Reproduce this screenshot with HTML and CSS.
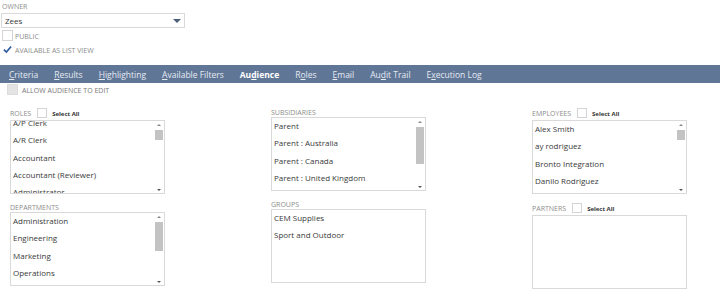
FILE: index.html
```html
<!DOCTYPE html>
<html lang="en">
<head>
    <meta charset="UTF-8">
    <title>Saved Search - Audience</title>
    <link rel="stylesheet" href="styles.css">
</head>
<body>
    <div class="page">
        <div class="main-fields">
            <div class="field-label">OWNER</div>
            <div class="dropdown">
                <span class="dropdown-value">Zees</span>
                <span class="dropdown-arrow"></span>
            </div>
            <div class="check-row">
                <span class="checkbox"></span>
                <span class="check-text">PUBLIC</span>
            </div>
            <div class="check-row">
                <span class="checkbox checked">
                    <svg width="10" height="9" viewBox="0 0 10 9"><path d="M1 4.6 L3.8 7.4 L9 1.2" fill="none" stroke="#2d5aa0" stroke-width="1.8"/></svg>
                </span>
                <span class="check-text">AVAILABLE AS LIST VIEW</span>
            </div>
        </div>

        <nav class="tabs">
            <span class="tab"><u>C</u>riteria</span>
            <span class="tab"><u>R</u>esults</span>
            <span class="tab"><u>H</u>ighlighting</span>
            <span class="tab"><u>A</u>vailable Filters</span>
            <span class="tab active">Au<u>d</u>ience</span>
            <span class="tab">R<u>o</u>les</span>
            <span class="tab"><u>E</u>mail</span>
            <span class="tab">Au<u>d</u>it Trail</span>
            <span class="tab">E<u>x</u>ecution Log</span>
        </nav>

        <div class="subtab">
            <div class="check-row allow">
                <span class="checkbox disabled"></span>
                <span class="check-text">ALLOW AUDIENCE TO EDIT</span>
            </div>

            <div class="audience-grid">
                <div class="audience-col">
                    <div class="list-field">
                        <div class="list-label tall">
                            <span>ROLES</span>
                            <span class="checkbox small"></span>
                            <span class="select-all">Select All</span>
                        </div>
                        <div class="listbox">
                            <ul class="list-items scrolled">
                                <li>A/P Clerk</li>
                                <li>A/R Clerk</li>
                                <li>Accountant</li>
                                <li>Accountant (Reviewer)</li>
                                <li>Administrator</li>
                            </ul>
                            <div class="scrollbar">
                                <span class="arrow up"></span>
                                <div class="track"><span class="thumb short"></span></div>
                                <span class="arrow down"></span>
                            </div>
                        </div>
                    </div>
                    <div class="list-field">
                        <div class="list-label">
                            <span>DEPARTMENTS</span>
                        </div>
                        <div class="listbox">
                            <ul class="list-items">
                                <li>Administration</li>
                                <li>Engineering</li>
                                <li>Marketing</li>
                                <li>Operations</li>
                            </ul>
                            <div class="scrollbar">
                                <span class="arrow up"></span>
                                <div class="track"><span class="thumb medium"></span></div>
                                <span class="arrow down"></span>
                            </div>
                        </div>
                    </div>
                </div>

                <div class="audience-col">
                    <div class="list-field">
                        <div class="list-label">
                            <span>SUBSIDIARIES</span>
                        </div>
                        <div class="listbox">
                            <ul class="list-items">
                                <li>Parent</li>
                                <li>Parent : Australia</li>
                                <li>Parent : Canada</li>
                                <li>Parent : United Kingdom</li>
                            </ul>
                            <div class="scrollbar">
                                <span class="arrow up"></span>
                                <div class="track"><span class="thumb long"></span></div>
                                <span class="arrow down"></span>
                            </div>
                        </div>
                    </div>
                    <div class="list-field">
                        <div class="list-label">
                            <span>GROUPS</span>
                        </div>
                        <div class="listbox">
                            <ul class="list-items">
                                <li>CEM Supplies</li>
                                <li>Sport and Outdoor</li>
                            </ul>
                        </div>
                    </div>
                </div>

                <div class="audience-col">
                    <div class="list-field">
                        <div class="list-label tall">
                            <span>EMPLOYEES</span>
                            <span class="checkbox small"></span>
                            <span class="select-all">Select All</span>
                        </div>
                        <div class="listbox">
                            <ul class="list-items">
                                <li>Alex Smith</li>
                                <li>ay rodriguez</li>
                                <li>Bronto Integration</li>
                                <li>Danilo Rodriguez</li>
                            </ul>
                            <div class="scrollbar">
                                <span class="arrow up"></span>
                                <div class="track"><span class="thumb short"></span></div>
                                <span class="arrow down"></span>
                            </div>
                        </div>
                    </div>
                    <div class="list-field">
                        <div class="list-label tall">
                            <span>PARTNERS</span>
                            <span class="checkbox small"></span>
                            <span class="select-all">Select All</span>
                        </div>
                        <div class="listbox"></div>
                    </div>
                </div>
            </div>
        </div>
    </div>
</body>
</html>
```

FILE: styles.css
```css
:root {
    --tab-color: #607697;
    --label-color: #8c8c8c;
    --text-color: #3a3a3a;
    --border-color: #d9d9d9;
}

* {
    box-sizing: border-box;
    margin: 0;
    padding: 0;
}

body {
    font-family: 'Open Sans', 'Liberation Sans', sans-serif;
    color: var(--text-color);
    background: #fff;
    width: 720px;
    height: 299px;
    overflow: hidden;
}

.page {
    padding-top: 2px;
}

.main-fields {
    padding-left: 2px;
}

.field-label {
    font-size: 7px;
    line-height: 10px;
    color: var(--label-color);
}

.dropdown {
    display: flex;
    align-items: center;
    justify-content: space-between;
    width: 184px;
    height: 15px;
    margin: 1px 0 0 -1px;
    padding: 0 3px 0 3px;
    border: 1px solid var(--border-color);
    font-size: 8px;
}

.dropdown-arrow {
    width: 0;
    height: 0;
    border-left: 4px solid transparent;
    border-right: 4px solid transparent;
    border-top: 4px solid #4b5d78;
}

.check-row {
    display: flex;
    align-items: flex-end;
    gap: 2px;
    height: 11px;
    margin-top: 2px;
}

.check-row + .check-row {
    margin-top: 3px;
}

.checkbox {
    display: inline-flex;
    align-items: center;
    justify-content: center;
    width: 11px;
    height: 11px;
    border: 1px solid #d4d4d4;
    background: #fff;
}

.checkbox.checked {
    border-color: transparent;
}

.checkbox.disabled {
    background: #e4e4e4;
    border-color: #dcdcdc;
}

.checkbox.small {
    width: 10px;
    height: 10px;
    margin: 0 5px 0 6px;
}

.check-text {
    font-size: 7px;
    line-height: 9px;
    color: var(--label-color);
}

.tabs {
    display: flex;
    align-items: center;
    gap: 16px;
    height: 18px;
    margin-top: 10px;
    padding-left: 9px;
    background: var(--tab-color);
    font-size: 8.5px;
    color: #e6ebf2;
}

.tab {
    position: relative;
    white-space: nowrap;
}

.tab u {
    text-underline-offset: 1px;
}

.tab.active {
    font-weight: 700;
    color: #fff;
}

.tab.active::after {
    content: '';
    position: absolute;
    left: 50%;
    bottom: -6px;
    margin-left: -3px;
    border-left: 3px solid transparent;
    border-right: 3px solid transparent;
    border-bottom: 3px solid #fff;
}

.subtab {
    padding-left: 7px;
}

.check-row.allow {
    margin-top: 1px;
    gap: 4px;
}

.check-row.allow .check-text {
    color: #777;
}

.audience-grid {
    display: grid;
    grid-template-columns: repeat(3, 155px);
    column-gap: 106px;
    margin-top: 12px;
    padding-left: 3px;
}

.audience-col {
    display: flex;
    flex-direction: column;
    gap: 8px;
}

.list-label {
    display: flex;
    align-items: flex-end;
    height: 10px;
    font-size: 7px;
    line-height: 8px;
    color: var(--label-color);
}

.list-label.tall {
    height: 13px;
    padding-bottom: 2px;
}

.select-all {
    font-size: 6px;
    font-weight: 700;
    color: #333;
}

.listbox {
    display: flex;
    height: 74px;
    border: 1px solid var(--border-color);
    overflow: hidden;
    background: #fff;
}

.list-items {
    flex: 1;
    list-style: none;
    margin-top: -1px;
    padding-left: 2px;
    font-size: 8px;
}

.list-items li {
    height: 17.3px;
    line-height: 17.3px;
    white-space: nowrap;
}

.list-items.scrolled {
    margin-top: -7px;
}

.scrollbar {
    display: flex;
    flex-direction: column;
    align-items: center;
    width: 9px;
    margin-right: 1px;
    padding: 3px 0 2px;
}

.arrow {
    width: 0;
    height: 0;
    border-left: 2px solid transparent;
    border-right: 2px solid transparent;
}

.arrow.up {
    border-bottom: 2px solid #888;
}

.arrow.down {
    border-top: 2px solid #555;
}

.track {
    flex: 1;
    width: 100%;
    padding-top: 4px;
}

.thumb {
    display: block;
    width: 8px;
    margin: 0 auto;
    background: #c3c3c3;
}

.thumb.short {
    height: 10px;
}

.thumb.medium {
    height: 29px;
}

.thumb.long {
    height: 37px;
}
```
